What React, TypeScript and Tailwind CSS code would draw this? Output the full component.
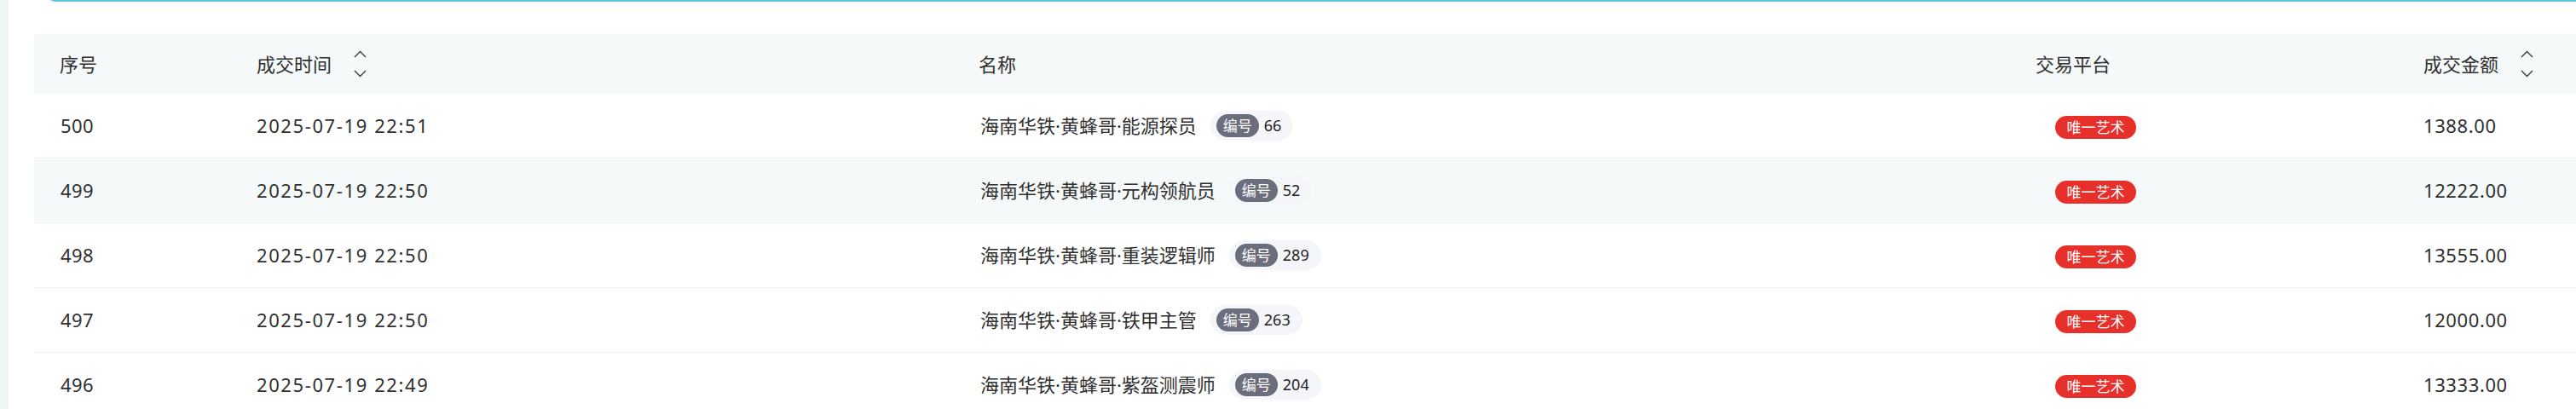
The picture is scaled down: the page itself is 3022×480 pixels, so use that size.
import React from "react";

interface TradeRow {
  seq: number;
  time: string;
  name: string;
  code: number;
  amount: string;
}

const rows: TradeRow[] = [
  { seq: 500, time: "2025-07-19 22:51", name: "海南华铁·黄蜂哥·能源探员", code: 66, amount: "1388.00" },
  { seq: 499, time: "2025-07-19 22:50", name: "海南华铁·黄蜂哥·元构领航员", code: 52, amount: "12222.00" },
  { seq: 498, time: "2025-07-19 22:50", name: "海南华铁·黄蜂哥·重装逻辑师", code: 289, amount: "13555.00" },
  { seq: 497, time: "2025-07-19 22:50", name: "海南华铁·黄蜂哥·铁甲主管", code: 263, amount: "12000.00" },
  { seq: 496, time: "2025-07-19 22:49", name: "海南华铁·黄蜂哥·紫盔测震师", code: 204, amount: "13333.00" },
];

const cols = "grid grid-cols-[230px_848px_1240px_455px_1fr]";

const SortIcon = () => (
  <span className="ml-[26px] flex flex-col items-center gap-[14px]">
    <svg width="15" height="9" viewBox="0 0 15 9" fill="none">
      <path d="M1 8 L7.5 1.5 L14 8" stroke="#3a3a3a" strokeWidth="1.4" />
    </svg>
    <svg width="15" height="9" viewBox="0 0 15 9" fill="none">
      <path d="M1 1 L7.5 7.5 L14 1" stroke="#3a3a3a" strokeWidth="1.4" />
    </svg>
  </span>
);

const App: React.FC = () => {
  return (
    <div className="flex h-[480px] w-[3022px] overflow-hidden bg-white font-['Noto_Sans','Noto_Sans_CJK_SC',sans-serif] text-[22px] text-[#2f2f2f]">
      {/* left gutter */}
      <div className="w-[10px] shrink-0 bg-[#f0f5f6]" />

      <div className="flex min-w-0 flex-1 flex-col">
        {/* bottom edge of the card above */}
        <div className="-mt-[20px] ml-[45px] h-[22px] shrink-0 rounded-bl-[10px] border-b-2 border-l-2 border-[#62c8dc]" />

        <div className="ml-[30px] mt-[38px]">
          {/* header */}
          <div className={`${cols} h-[70px] items-center bg-[#f5f9fa]`}>
            <div className="pl-[30px]">序号</div>
            <div className="flex items-center pl-[31px]">
              <span>成交时间</span>
              <SortIcon />
            </div>
            <div className="pl-[30px]">名称</div>
            <div className="pl-[30px]">交易平台</div>
            <div className="flex items-center pl-[30px]">
              <span>成交金额</span>
              <SortIcon />
            </div>
          </div>

          {rows.map((r, i) => (
            <div
              key={r.seq}
              className={`${cols} h-[76px] items-center border-b border-[#f0f2f3] ${
                i === 1 ? "bg-[#f6f9fa]" : "bg-white"
              }`}
            >
              <div className="pl-[31px] tracking-[0.4px]">{r.seq}</div>
              <div className="pl-[31px] tracking-[1.6px]">{r.time}</div>
              <div className="flex items-center pl-[32px]">
                <span>{r.name}</span>
                <span className="ml-[16px] flex h-[35px] items-center rounded-full bg-[#f5f6fa] pl-[7px] pr-[14px]">
                  <span className="flex h-[27px] items-center rounded-full bg-[#6b6e7c] px-[8px] text-[17px] text-white">
                    编号
                  </span>
                  <span className="ml-[6px] text-[18px] text-[#222]">{r.code}</span>
                </span>
              </div>
              <div className="pl-[53px]">
                <span className="inline-flex h-[27px] w-[95px] items-center justify-center rounded-full bg-[#e8302a] text-[17px] text-white">
                  唯一艺术
                </span>
              </div>
              <div className="pl-[30px] tracking-[0.6px]">{r.amount}</div>
            </div>
          ))}
        </div>
      </div>
    </div>
  );
};

export default App;
